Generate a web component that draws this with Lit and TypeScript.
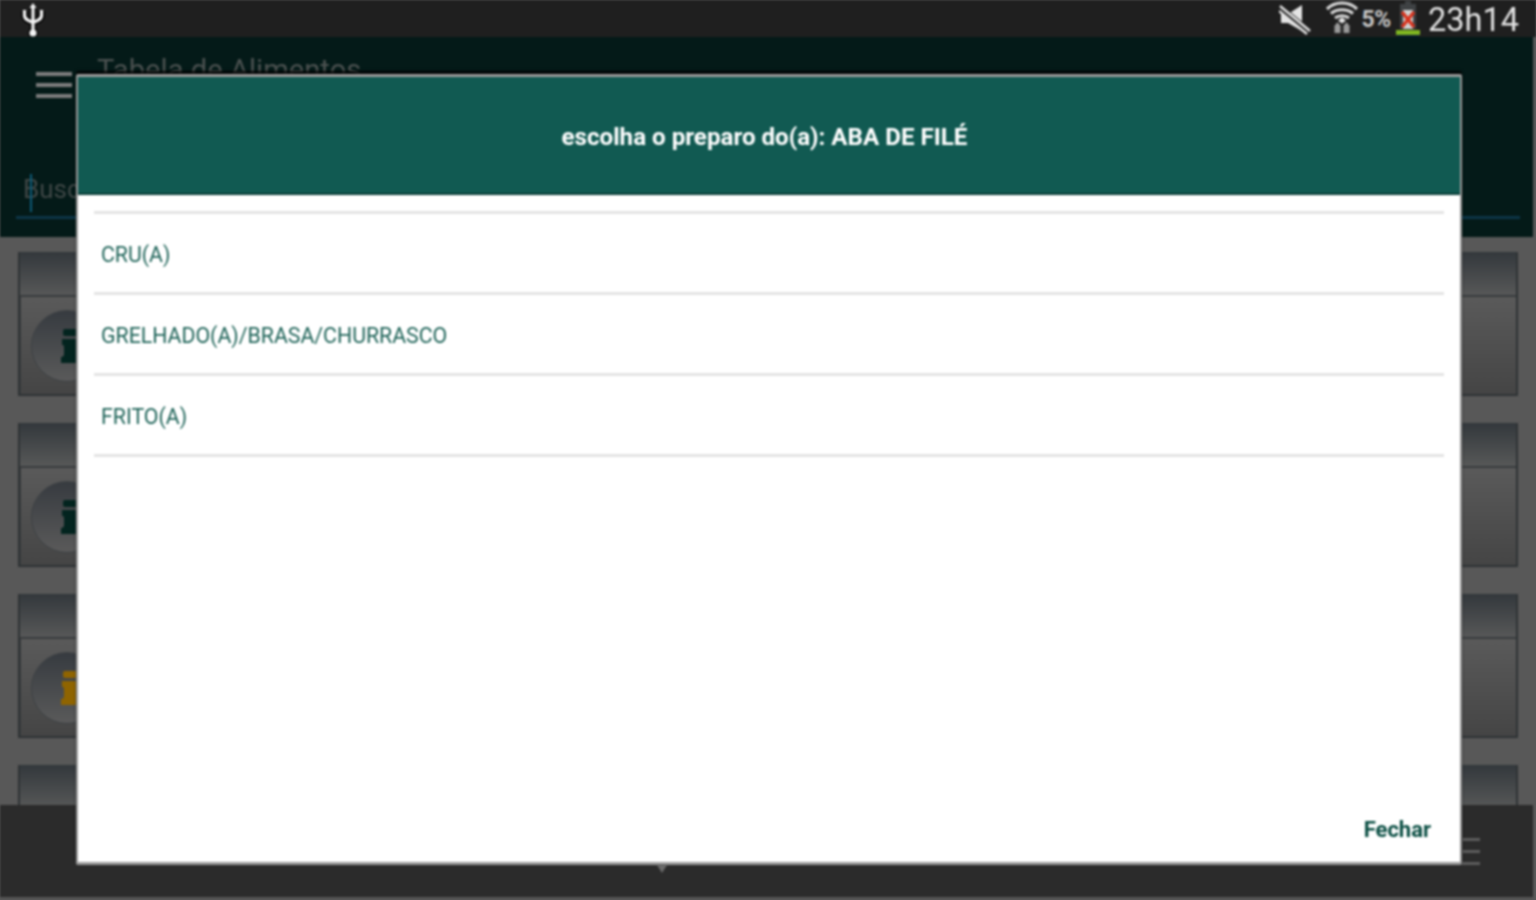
import { LitElement, html, css, svg } from "lit";
import { customElement } from "lit/decorators.js";

const usb = svg`<svg class="usb" width="26" height="36" viewBox="0 0 26 36">
  <g fill="none" stroke="#000" stroke-width="6.500">
    <path d="M13 5v25M4.500 9v4.500c0 4 4.500 5.500 8.500 7M21.500 9v4.500c0 4-4.500 5.500-8.500 7"/>
  </g>
  <circle cx="13" cy="31" r="5" fill="#000"/>
  <g fill="none" stroke="#f4f4f4" stroke-width="3.200">
    <path d="M13 5v25M4.500 8v5.500c0 4 4.500 5.500 8.500 7M21.500 8v5.500c0 4-4.500 5.500-8.500 7"/>
  </g>
  <path d="M13 1l3.500 5h-7z" fill="#f4f4f4"/>
  <circle cx="13" cy="31" r="3.600" fill="#f4f4f4"/>
</svg>`;

const mute = svg`<svg width="34" height="32" viewBox="0 0 34 32">
  <path d="M2 11h7l14-9v26L9 20H2z" fill="#e4e4e4"/>
  <path d="M1 5l29 24" stroke="#1f1f1f" stroke-width="7"/>
  <path d="M1 3l30 25M0 8l28 23" stroke="#e4e4e4" stroke-width="2.400"/></svg>`;

const wifi = svg`<svg width="34" height="34" viewBox="0 0 34 34">
  <g fill="none" stroke="#d8d8d8" stroke-width="3.200">
    <path d="M2 9C10 1 24 1 32 9"/><path d="M6 13.500c6-5 16-5 22 0"/><path d="M10 18c4-3 10-3 14 0"/>
  </g>
  <path d="M13 20.500l4-3 4 3-4 3z" fill="#e8e8e8"/>
  <path d="M9.500 25h6v8h-6zM18.500 25h6v8h-6z" fill="#9a9a9a"/>
  <path d="M12.500 25v-2M21.500 25v-2" stroke="#9a9a9a" stroke-width="3"/></svg>`;

const battery = svg`<svg width="24" height="36" viewBox="0 0 24 36">
  <path d="M9 0h6v3h5v25H4V3h5z" fill="#3f4244"/>
  <path d="M7 9h10v19H7z" fill="#cfd2d2"/>
  <path d="M6 11l12 15M18 11L6 26" stroke="#d8321c" stroke-width="3.400"/>
  <path d="M0 29h24v5H0z" fill="#7fb521"/>
  <path d="M1 34h22v2H1z" fill="#0b1c30"/></svg>`;

const infoIcon = (c: string) => svg`<svg width="24" height="34" viewBox="0 0 24 34">
  <rect x="2" y="0" width="20" height="7" rx="2" fill="${c}"/>
  <path d="M1 10h17v16h6v8H0v-6c2 0 3-1 3-3v-7c0-2-1-2-2-2z" fill="${c}"/></svg>`;

const cards = ["#03241f", "#03241f", "#8f6400", ""];

@customElement("app-root")
export class AppRoot extends LitElement {
  static styles = css`
    :host {
      display: block;
      width: 1536px;
      height: 900px;
      position: relative;
      overflow: hidden;
      background: #585858;
      font-family: Roboto, "Liberation Sans", sans-serif;
    }
    .screen {
      height: 100%;
      display: flex;
      flex-direction: column;
      filter: blur(0.8px);
    }
    .status {
      height: 37px;
      flex: none;
      background: #1f1f1f;
      display: flex;
      align-items: center;
      padding: 0 17px 0 20px;
    }
    .usb { margin-top: 2px; }
    .status .right {
      margin-left: auto;
      display: flex;
      align-items: center;
    }
    .status .right > svg { display: block; }
    .pct {
      font-size: 23px;
      color: #c4c4c4;
      font-weight: 700;
      margin: 0 5px 0 2px;
      letter-spacing: -0.3px;
      padding-top: 2px;
    }
    .wifi-gap { margin: 0 0 0 12px; }
    .clock {
      font-size: 32.500px;
      color: #e2e2e2;
      margin-left: 8px;
      line-height: 37px;
      padding-top: 4px;
    }
    .appbar {
      height: 200px;
      flex: none;
      margin-right: 3px;
      background: #041a18;
      display: flex;
      flex-direction: column;
      box-sizing: border-box;
      padding: 15px 13px 0 16px;
    }
    .toprow { display: flex; gap: 25px; }
    .burger {
      width: 36px;
      margin: 20px 0 0 20px;
      display: flex;
      flex-direction: column;
      gap: 7px;
    }
    .burger i { display: block; height: 4px; background: #7c7c7c; }
    .title { font-size: 29.200px; line-height: 36px; color: #4b5150; }
    .search {
      margin-top: 73px;
      height: 45px;
      border-bottom: 3px solid #0d3547;
      padding-left: 7px;
      font-size: 26px;
      line-height: 36px;
      color: #3f4746;
      position: relative;
    }
    .cursor {
      position: absolute;
      left: 14px;
      top: 3px;
      width: 2px;
      height: 38px;
      background: #0c5a77;
    }
    .content {
      flex: 1;
      min-height: 0;
      overflow: hidden;
      padding: 15px 18px 0;
      display: flex;
      flex-direction: column;
      gap: 27px;
    }
    .card {
      flex: none;
      height: 144px;
      box-sizing: border-box;
      border: 2px solid #2f3335;
      border-top: 0;
      display: flex;
      flex-direction: column;
    }
    .card .head {
      height: 43px;
      flex: none;
      background: linear-gradient(#33383c, #575858);
      border-bottom: 2px solid #393c3e;
    }
    .card .body {
      flex: 1;
      border-left: 1px solid #3a3d3f;
      background: linear-gradient(#5a5a5a, #454545);
      display: flex;
      align-items: center;
      padding-left: 10px;
    }
    .disc {
      width: 72px;
      height: 72px;
      border-radius: 50%;
      border: 1px solid #3d4144;
      background: linear-gradient(#373b40, #5a5a5a);
      display: flex;
      align-items: center;
      padding-left: 29px;
      box-sizing: border-box;
    }
    .bottom {
      height: 92px;
      flex: none;
      margin-right: 3px;
      background: #2b2b2b;
      border-bottom: 3px solid #555;
      display: flex;
      box-sizing: content-box;
    }
    .nav {
      flex: 1;
      padding-left: 657px;
      padding-top: 60px;
    }
    .nav svg { display: block; }
    .bburger {
      width: 18px;
      margin: 33px 53px 0 0;
      display: flex;
      flex-direction: column;
      gap: 9px;
    }
    .bburger i { display: block; height: 3px; background: #5c5c5c; }
    .dialog {
      position: absolute;
      left: 76px;
      top: 74px;
      width: 1386px;
      height: 791px;
      box-sizing: border-box;
      border: 2px solid #9a9a9a;
      border-top-width: 3px;
      border-bottom-width: 3px;
      border-radius: 2px;
      background: #fff;
      display: flex;
      flex-direction: column;
      box-shadow: 0 -3px 2px rgba(0, 0, 0, 0.85);
      filter: blur(0.8px);
    }
    .dialog header {
      height: 118px;
      flex: none;
      box-sizing: border-box;
      background: #115a52;
      border-bottom: 2px solid #0a3d38;
      display: flex;
      align-items: center;
      justify-content: center;
      padding: 3px 9px 0 0;
      color: #fff;
      font-size: 24.150px;
      font-weight: 700;
    }
    .list {
      list-style: none;
      margin: 0;
      padding: 16px 16px 0;
      flex: 1;
    }
    .list li {
      height: 75px;
      border-top: 3px solid #e4e4e4;
      display: flex;
      align-items: center;
      padding: 3px 0 0 7px;
      box-sizing: content-box;
      font-size: 21.300px;
      color: #1f6459;
    }
    .list li:last-child {
      height: 0;
      padding: 0;
    }
    .foot {
      display: flex;
      justify-content: flex-end;
      padding: 0 29px 20px 0;
      color: #0a4e43;
      font-size: 22px;
      font-weight: 700;
    }
  `;

  render() {
    return html`
      <div class="screen">
        <div class="status">
          ${usb}
          <div class="right">
            ${mute}
            <span class="wifi-gap">${wifi}</span>
            <span class="pct">5%</span>
            ${battery}
            <span class="clock">23h14</span>
          </div>
        </div>
        <div class="appbar">
          <div class="toprow">
            <div class="burger"><i></i><i></i><i></i></div>
            <div class="title">Tabela de Alimentos</div>
          </div>
          <div class="search">Busca<span class="cursor"></span></div>
        </div>
        <div class="content">
          ${cards.map(
            (c) => html`<div class="card">
              <div class="head"></div>
              <div class="body">
                ${c ? html`<div class="disc">${infoIcon(c)}</div>` : ""}
              </div>
            </div>`
          )}
        </div>
        <div class="bottom">
          <div class="nav">
            <svg width="10" height="8" viewBox="0 0 10 8"><path d="M0 0h10L5 8z" fill="#6a6a6a"/></svg>
          </div>
          <div class="bburger"><i></i><i></i><i></i></div>
        </div>
      </div>
      <div class="dialog">
        <header>escolha o preparo do(a): ABA DE FILÉ</header>
        <ul class="list">
          <li>CRU(A)</li>
          <li>GRELHADO(A)/BRASA/CHURRASCO</li>
          <li>FRITO(A)</li>
          <li></li>
        </ul>
        <div class="foot">Fechar</div>
      </div>
    `;
  }
}
